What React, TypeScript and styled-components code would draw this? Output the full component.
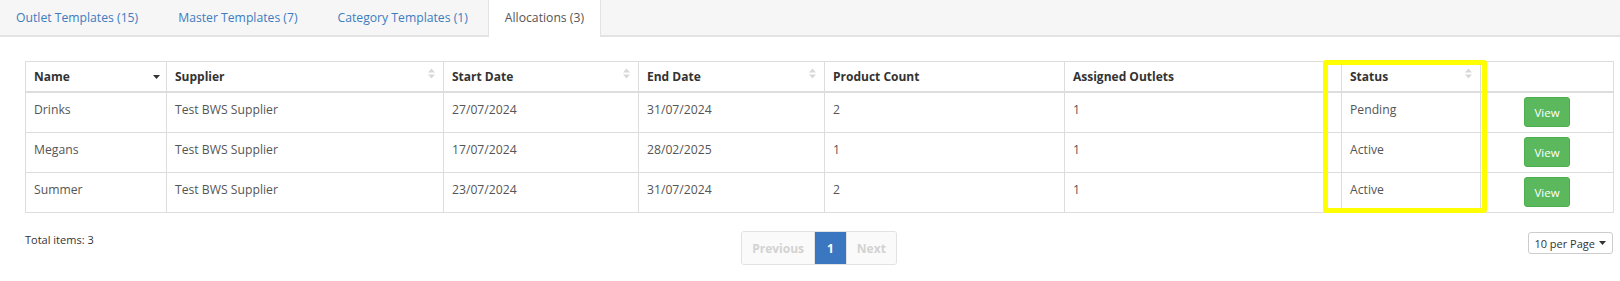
import React from 'react';
import styled, { createGlobalStyle } from 'styled-components';

const GlobalStyle = createGlobalStyle`
  body {
    margin: 0;
    background: #ffffff;
    font-family: 'Open Sans', 'Liberation Sans', sans-serif;
  }
`;

const Page = styled.div`
  width: 1620px;
`;

const TabBar = styled.div`
  display: flex;
  height: 35px;
  padding-left: 0;
  background: #f6f6f6;
  border-bottom: 2px solid #e3e3e3;
`;

const Tab = styled.div<{ $active?: boolean }>`
  padding: 0 ${(p) => (p.$active ? 16 : 19)}px;
  line-height: 35px;
  font-size: 12.2px;
  color: ${(p) => (p.$active ? '#555555' : '#3d7cbf')};
  background: ${(p) => (p.$active ? '#ffffff' : 'transparent')};
  border-left: 1px solid ${(p) => (p.$active ? '#e3e3e3' : 'transparent')};
  border-right: 1px solid ${(p) => (p.$active ? '#e3e3e3' : 'transparent')};
  height: ${(p) => (p.$active ? '37px' : '35px')};
  box-sizing: border-box;
  margin-bottom: ${(p) => (p.$active ? '-2px' : '0')};
  &:first-child {
    margin-left: -4px;
  }
`;

const Content = styled.div`
  padding: 24px 7px 0 25px;
`;

const TableWrap = styled.div`
  position: relative;
`;

const Table = styled.table`
  width: 100%;
  border-collapse: collapse;
  table-layout: fixed;
  border: 1px solid #dddddd;
`;

const Th = styled.th`
  position: relative;
  text-align: left;
  padding: 7px 8px;
  line-height: 15px;
  font-size: 12px;
  font-weight: 700;
  color: #333333;
  border: 1px solid #dddddd;
  border-bottom-width: 2px;
`;

const SortIcon = styled.span<{ $right: number; $top: number }>`
  position: absolute;
  top: ${(p) => p.$top}px;
  right: ${(p) => p.$right}px;
  display: flex;
`;

const Td = styled.td<{ $center?: boolean }>`
  padding: ${(p) => (p.$center ? '4px 8px 5px' : '8px 8px')};
  vertical-align: top;
  text-align: ${(p) => (p.$center ? 'center' : 'left')};
  font-size: 12.2px;
  line-height: 17px;
  color: #555555;
  border: 1px solid #dddddd;
`;

const ViewButton = styled.button`
  display: block;
  margin: 0 auto;
  width: 46px;
  height: 30px;
  background: #5cb85c;
  border: 1px solid #4cae4c;
  border-radius: 3px;
  color: #ffffff;
  font-family: 'Open Sans', 'Liberation Sans', sans-serif;
  font-size: 11.5px;
  padding: 0;
`;

const Highlight = styled.div`
  position: absolute;
  left: 1298px;
  top: -1px;
  width: 164px;
  height: 153px;
  box-sizing: border-box;
  border: 5px solid #ffff00;
  border-radius: 3px;
  pointer-events: none;
`;

const Footer = styled.div`
  display: grid;
  grid-template-columns: 1fr auto 1fr;
  align-items: start;
  margin-top: 18px;
`;

const Total = styled.div`
  font-size: 11px;
  color: #333333;
  margin-top: 1px;
`;

const Pagination = styled.div`
  display: flex;
  height: 32px;
  border: 1px solid #e2e2e2;
  border-radius: 3px;
  overflow: hidden;
`;

const PageItem = styled.div<{ $active?: boolean; $pad: number }>`
  display: flex;
  align-items: center;
  padding: 0 ${(p) => p.$pad}px;
  font-size: 12px;
  font-weight: 700;
  color: ${(p) => (p.$active ? '#ffffff' : '#d2d2d2')};
  background: ${(p) => (p.$active ? '#3a77c0' : '#fafafa')};
  & + & {
    border-left: 1px solid #e2e2e2;
  }
`;

const PerPage = styled.div`
  justify-self: end;
  display: flex;
  align-items: center;
  gap: 4px;
  height: 20px;
  margin-top: 1px;
  padding: 0 6px 0 5px;
  border: 1px solid #cccccc;
  border-radius: 3px;
  font-size: 11px;
  color: #333333;
`;

const Caret = ({ color = '#333333' }: { color?: string }) => (
  <svg width="7" height="4" viewBox="0 0 7 4">
    <path d="M0 0 L7 0 L3.5 4 Z" fill={color} />
  </svg>
);

const UpDown = () => (
  <svg width="7" height="11" viewBox="0 0 7 11">
    <path d="M0 4.5 L3.5 0.5 L7 4.5 Z" fill="#d8d8d8" />
    <path d="M0 6.5 L7 6.5 L3.5 10.5 Z" fill="#d8d8d8" />
  </svg>
);

type Column = { title: string; width: number; sort?: 'down' | 'both' };

const columns: Column[] = [
  { title: 'Name', width: 141, sort: 'down' },
  { title: 'Supplier', width: 277, sort: 'both' },
  { title: 'Start Date', width: 195, sort: 'both' },
  { title: 'End Date', width: 186, sort: 'both' },
  { title: 'Product Count', width: 240 },
  { title: 'Assigned Outlets', width: 277 },
  { title: 'Status', width: 139, sort: 'both' },
  { title: '', width: 133 },
];

const rows = [
  ['Drinks', 'Test BWS Supplier', '27/07/2024', '31/07/2024', '2', '1', 'Pending'],
  ['Megans', 'Test BWS Supplier', '17/07/2024', '28/02/2025', '1', '1', 'Active'],
  ['Summer', 'Test BWS Supplier', '23/07/2024', '31/07/2024', '2', '1', 'Active'],
];

const tabs = ['Outlet Templates (15)', 'Master Templates (7)', 'Category Templates (1)', 'Allocations (3)'];

export default function App() {
  return (
    <Page>
      <GlobalStyle />
      <TabBar>
        {tabs.map((t, i) => (
          <Tab key={t} $active={i === 3}>
            {t}
          </Tab>
        ))}
      </TabBar>
      <Content>
        <TableWrap>
          <Table>
            <colgroup>
              {columns.map((c, i) => (
                <col key={i} style={{ width: c.width }} />
              ))}
            </colgroup>
            <thead>
              <tr>
                {columns.map((c, i) => (
                  <Th key={i}>
                    {c.title}
                    {c.sort === 'down' && (
                      <SortIcon $right={6} $top={13}>
                        <Caret />
                      </SortIcon>
                    )}
                    {c.sort === 'both' && (
                      <SortIcon $right={8} $top={6}>
                        <UpDown />
                      </SortIcon>
                    )}
                  </Th>
                ))}
              </tr>
            </thead>
            <tbody>
              {rows.map((r) => (
                <tr key={r[0]}>
                  {r.map((v, i) => (
                    <Td key={i}>{v}</Td>
                  ))}
                  <Td $center>
                    <ViewButton>View</ViewButton>
                  </Td>
                </tr>
              ))}
            </tbody>
          </Table>
          <Highlight />
        </TableWrap>
        <Footer>
          <Total>Total items: 3</Total>
          <Pagination>
            <PageItem $pad={10}>Previous</PageItem>
            <PageItem $pad={12} $active>
              1
            </PageItem>
            <PageItem $pad={10}>Next</PageItem>
          </Pagination>
          <PerPage>
            10 per Page <Caret />
          </PerPage>
        </Footer>
      </Content>
    </Page>
  );
}
